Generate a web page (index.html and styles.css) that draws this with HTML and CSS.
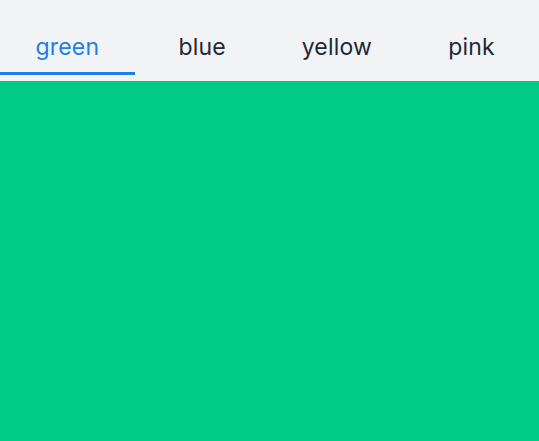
FILE: index.html
```html
<!DOCTYPE html>
<html>
<head>
<meta charset="utf-8">
<link rel="stylesheet" href="styles.css">
</head>
<body>
<div class="page">
  <nav class="tabs">
    <div class="tab active">green</div>
    <div class="tab">blue</div>
    <div class="tab">yellow</div>
    <div class="tab">pink</div>
  </nav>
  <main class="panel"></main>
</div>
</body>
</html>
```
FILE: styles.css
```css
html, body {
  margin: 0;
  padding: 0;
  height: 100%;
}
body {
  font-family: Inter, "Noto Sans", sans-serif;
}
.page {
  display: flex;
  flex-direction: column;
  height: 100%;
}
.tabs {
  display: grid;
  grid-template-columns: repeat(4, 1fr);
  height: 81px;
  background: #f1f3f5;
}
.tab {
  display: flex;
  align-items: center;
  justify-content: center;
  padding-top: 21px;
  font-size: 23px;
  letter-spacing: 0.2px;
  color: #1f2937;
  border-bottom: 3px solid transparent;
  margin-bottom: 6px;
  box-sizing: border-box;
}
.tab.active {
  color: #1e7ee4;
  border-bottom-color: #1e7ee4;
}
.panel {
  flex: 1;
  background: #00cb86;
}
```
